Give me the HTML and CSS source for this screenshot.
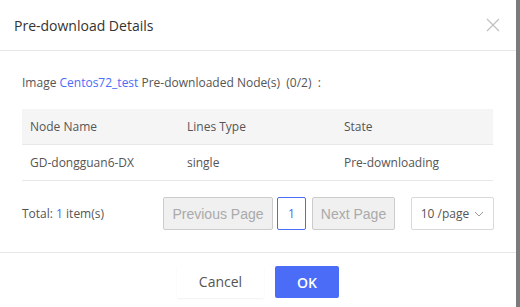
FILE: index.html
```html
<!DOCTYPE html>
<html lang="en">
<head>
    <meta charset="UTF-8">
    <meta name="viewport" content="width=device-width, initial-scale=1.0">
    <title>Pre-download Details</title>
    <link rel="stylesheet" href="styles.css">
</head>
<body>
    <div class="dialog">
        <!-- Header -->
        <div class="dialog-header">
            <span class="dialog-title">Pre-download Details</span>
            <span class="dialog-close">
                <svg width="14" height="14" viewBox="0 0 14 14">
                    <path d="M1 1 L13 13 M13 1 L1 13" stroke="#c0c0c0" stroke-width="1.2" fill="none"/>
                </svg>
            </span>
        </div>

        <!-- Content -->
        <div class="dialog-body">
            <div class="summary">
                Image <a class="link">Centos72_test</a> Pre-downloaded Node(s) &nbsp;(0/2) &nbsp;:
            </div>

            <table class="node-table">
                <thead>
                    <tr>
                        <th>Node Name</th>
                        <th>Lines Type</th>
                        <th>State</th>
                    </tr>
                </thead>
                <tbody>
                    <tr>
                        <td>GD-dongguan6-DX</td>
                        <td>single</td>
                        <td>Pre-downloading</td>
                    </tr>
                </tbody>
            </table>

            <div class="pager">
                <div class="pager-total">Total: <span class="link">1</span> item(s)</div>
                <div class="pager-controls">
                    <button class="page-btn page-prev" disabled>Previous Page</button>
                    <span class="page-num">1</span>
                    <button class="page-btn page-next" disabled>Next Page</button>
                    <span class="page-size">10 /page
                        <svg width="10" height="6" viewBox="0 0 10 6">
                            <path d="M1 1 L5 5 L9 1" stroke="#999" stroke-width="1" fill="none"/>
                        </svg>
                    </span>
                </div>
            </div>
        </div>

        <!-- Footer -->
        <div class="dialog-footer">
            <button class="btn btn-cancel">Cancel</button>
            <button class="btn btn-ok">OK</button>
        </div>
    </div>
</body>
</html>
```

FILE: styles.css
```css
/* General Styling */
body {
    margin: 0;
    padding: 0;
    background: #7b7b7b;
    font-family: 'Open Sans', 'Noto Sans', sans-serif;
    color: #555;
    font-size: 12px;
}

/* Dialog Card */
.dialog {
    width: 516px;
    height: 307px;
    background: white;
}

/* Header */
.dialog-header {
    height: 50px;
    border-bottom: 1px solid #e8e8e8;
    display: flex;
    align-items: center;
    justify-content: space-between;
    padding: 0 16px 0 14px;
}

.dialog-title {
    font-size: 14px;
    font-weight: 500;
    color: #333;
}

.dialog-close {
    display: flex;
}

/* Body */
.dialog-body {
    padding: 22px 23px 0 22px;
}

.summary {
    height: 20px;
    line-height: 20px;
    color: #555;
}

.link {
    color: #4a6cf7;
}

/* Table */
.node-table {
    width: 100%;
    margin-top: 16px;
    border-collapse: collapse;
    table-layout: fixed;
}

.node-table th,
.node-table td {
    text-align: left;
    font-weight: normal;
    padding: 0 8px;
    height: 35px;
    border-bottom: 1px solid #e8e8e8;
    color: #555;
}

.node-table th {
    background: #f5f5f5;
}

/* Pagination */
.pager {
    margin-top: 16px;
    margin-right: -1px;
    display: flex;
    align-items: center;
    justify-content: space-between;
    height: 33px;
}

.pager-controls {
    display: flex;
    align-items: center;
}

.page-btn {
    font-family: 'Liberation Sans', Arial, sans-serif;
    font-size: 14px;
    color: #aaa;
    background: #f0f0f0;
    border: 1px solid #ccc;
    border-radius: 2px;
    height: 33px;
    padding: 0;
}

.page-prev {
    width: 110px;
}

.page-next {
    width: 83px;
}

.page-num {
    width: 27px;
    height: 31px;
    border: 1px solid #4a6cf7;
    border-radius: 2px;
    color: #4a6cf7;
    display: flex;
    align-items: center;
    justify-content: center;
    margin: 0 6px 0 4px;
}

.page-size {
    margin-left: 16px;
    width: 81px;
    height: 31px;
    border: 1px solid #d9d9d9;
    border-radius: 2px;
    display: flex;
    align-items: center;
    justify-content: center;
    gap: 5px;
    color: #555;
}

/* Footer */
.dialog-footer {
    margin-top: 22px;
    border-top: 1px solid #e8e8e8;
    display: flex;
    justify-content: center;
    gap: 11px;
    padding-top: 12px;
}

.btn {
    font-family: 'Open Sans', 'Noto Sans', sans-serif;
    font-size: 14px;
    border: none;
    border-radius: 2px;
    height: 33px;
}

.btn-cancel {
    width: 87px;
    background: white;
    color: #555;
    box-shadow: 0 1px 2px rgba(0, 0, 0, 0.06);
}

.btn-ok {
    width: 64px;
    background: #4a6cf7;
    color: white;
    font-weight: 600;
    margin-top: 1px;
    height: 32px;
}
```
